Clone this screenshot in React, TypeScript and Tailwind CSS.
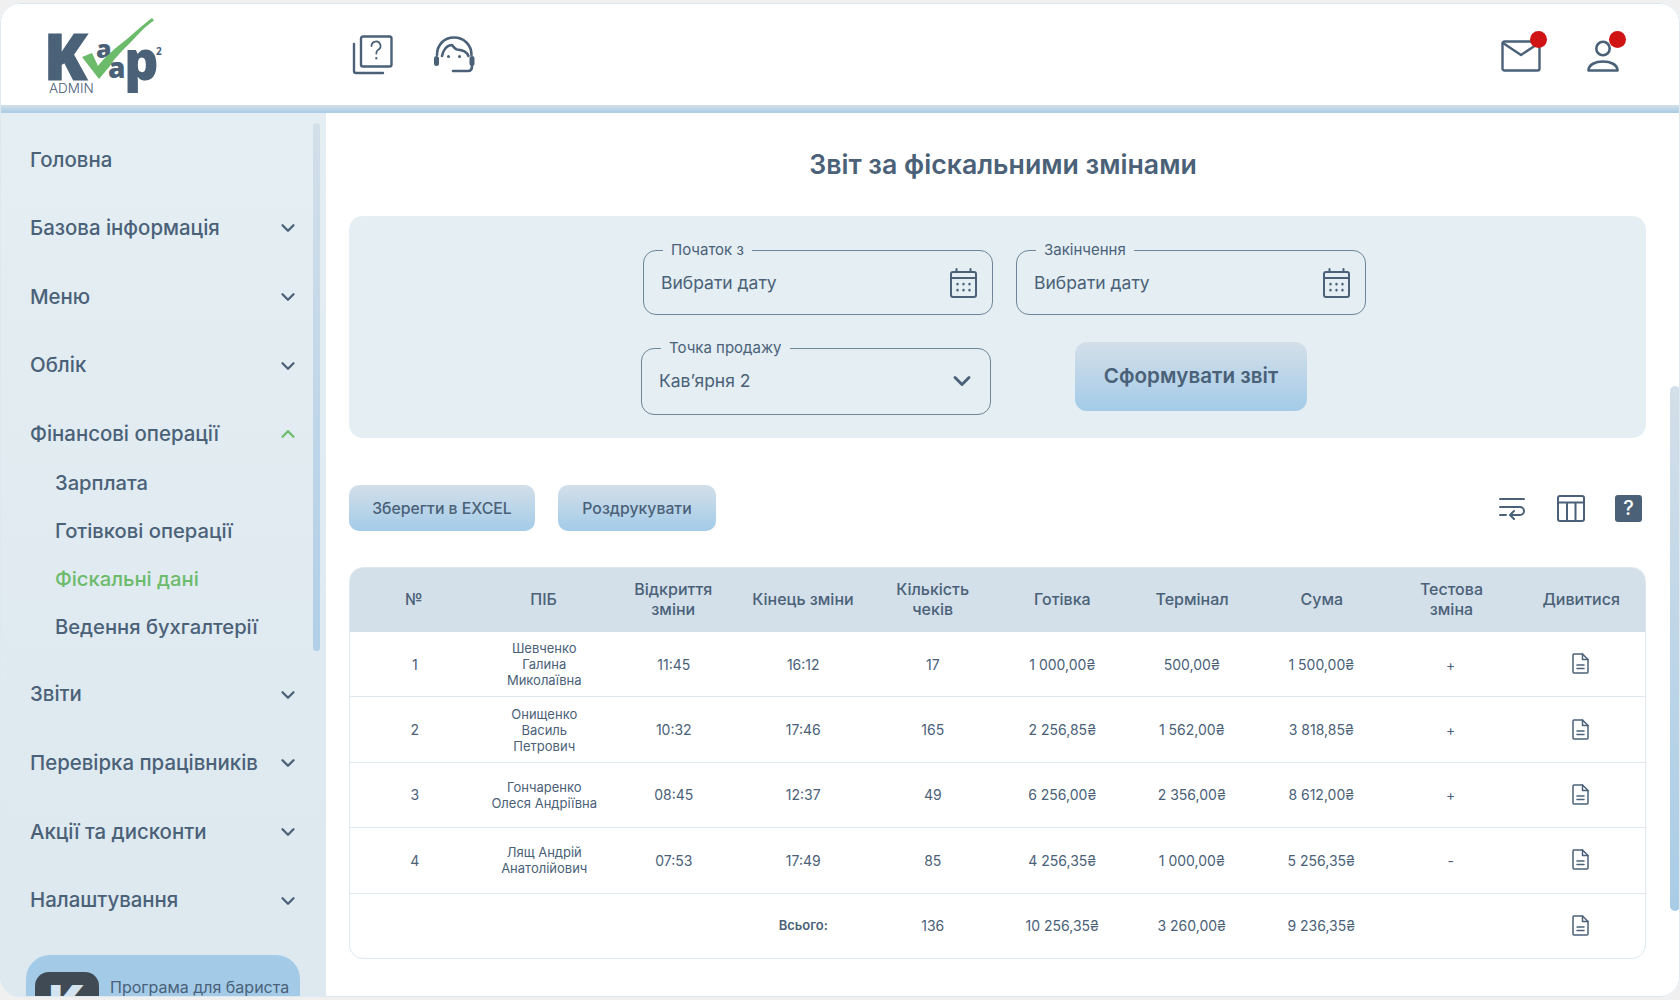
import { ChevronDown, ChevronUp } from "lucide-react";

const font = "font-['Inter',sans-serif]";

const rows = [
  { n: "1", name: ["Шевченко", "Галина", "Миколаївна"], open: "11:45", end: "16:12", count: "17", cash: "1 000,00₴", term: "500,00₴", sum: "1 500,00₴", test: "+" },
  { n: "2", name: ["Онищенко", "Василь", "Петрович"], open: "10:32", end: "17:46", count: "165", cash: "2 256,85₴", term: "1 562,00₴", sum: "3 818,85₴", test: "+" },
  { n: "3", name: ["Гончаренко", "Олеся Андріївна"], open: "08:45", end: "12:37", count: "49", cash: "6 256,00₴", term: "2 356,00₴", sum: "8 612,00₴", test: "+" },
  { n: "4", name: ["Лящ Андрій", "Анатолійович"], open: "07:53", end: "17:49", count: "85", cash: "4 256,35₴", term: "1 000,00₴", sum: "5 256,35₴", test: "-" },
];

function Logo() {
  return (
    <svg width="122" height="82" viewBox="0 0 122 82" className="ml-[44px]">
      <text x="0" y="67" fontFamily="Open Sans" fontWeight="800" fontSize="63" fill="#4a6178" stroke="#4a6178" strokeWidth="1.200">K</text>
      <text x="52" y="45" fontFamily="Open Sans" fontWeight="800" fontSize="25" fill="#4a6178">a</text>
      <text x="64" y="65" fontFamily="Open Sans" fontWeight="800" fontSize="28" fill="#4a6178">a</text>
      <text x="80" y="67" fontFamily="Open Sans" fontWeight="800" fontSize="54" fill="#4a6178">p</text>
      <text x="112" y="42" fontFamily="Open Sans" fontWeight="700" fontSize="10" fill="#4a6178">2</text>
      <path d="M38 44L48 40L54 53C60 45 70 36 83 26C92 18 100 11 108 5L110 7.500C100 14 94 22 86 30C76 40 70 46 66 53L55 66Z" fill="#6cbb6b" />
      <text x="5" y="80" fontFamily="Inter" fontWeight="300" fontSize="13.5" fill="#4a6178">ADMIN</text>
    </svg>
  );
}

function HelpIcon() {
  return (
    <svg width="41" height="40" viewBox="0 0 41 40" fill="none" stroke="#4a6178" strokeWidth="2.4" strokeLinecap="round" strokeLinejoin="round">
      <rect x="9" y="1.5" width="30.5" height="30" rx="2" />
      <path d="M2 9v27a2 2 0 0 0 2 2h27" />
      <path d="M19.5 11a4.5 4.5 0 1 1 6.5 4c-1.5 .9-1.7 2-1.7 3.5" strokeWidth="1.8" />
      <path d="M24.3 23v.4" strokeWidth="2.2" />
    </svg>
  );
}

function SupportIcon() {
  return (
    <svg width="41" height="38" viewBox="0 0 41 38" fill="none" stroke="#4a6178" strokeWidth="2.6" strokeLinecap="round" strokeLinejoin="round">
      <path d="M3 19C3 9 10 1.500 20 1.500S37.500 9 37.500 19" />
      <path d="M8 20C9 14 13 9 18 9c1.500 2 3 4 5 4.500 5 .5 10 2 11.500 6.500" />
      <path d="M38 30c0 3-1.500 5-4 5H19" />
      <rect x="0" y="20" width="5" height="10" rx="2.500" fill="#4a6178" stroke="none" />
      <rect x="35.500" y="20" width="5" height="10" rx="2.500" fill="#4a6178" stroke="none" />
      <circle cx="14.500" cy="20.500" r="1.500" fill="#4a6178" stroke="none" />
      <circle cx="25.500" cy="20.500" r="1.500" fill="#4a6178" stroke="none" />
    </svg>
  );
}

function MailIcon() {
  return (
    <svg width="40" height="32" viewBox="0 0 40 32" fill="none" stroke="#4a6178" strokeWidth="2.4" strokeLinecap="round" strokeLinejoin="round">
      <rect x="1.5" y="1.5" width="37" height="29" rx="2" />
      <path d="M2 3l18 12L38 3" />
    </svg>
  );
}

function UserIcon() {
  return (
    <svg width="32" height="32" viewBox="0 0 32 32" fill="none" stroke="#4a6178" strokeWidth="2.6" strokeLinejoin="round">
      <circle cx="16" cy="8.5" r="6.7" />
      <path d="M1.500 30.500c0-6 7-9 14.500-9s14.500 3 14.500 9z" />
    </svg>
  );
}

function CalendarIcon() {
  return (
    <svg width="27" height="30" viewBox="0 0 27 30" fill="none" stroke="#4a6178" strokeWidth="2" strokeLinecap="round">
      <rect x="1" y="4" width="25" height="25" rx="2" />
      <path d="M1 10h25M6.500 1v3M20.500 1v3" />
      <path d="M7.500 16v.2M13.500 16v.2M19.500 16v.2M7.500 22v.2M13.500 22v.2M19.500 22v.2" strokeWidth="2.400" />
    </svg>
  );
}

function DocIcon() {
  return (
    <svg width="17" height="21" viewBox="0 0 17 21" fill="none" stroke="#4a6178" strokeWidth="1.500" strokeLinejoin="round" strokeLinecap="round" className="-mt-[1px]">
      <path d="M1 2a1 1 0 0 1 1-1h8.500L16 6.500V19a1 1 0 0 1-1 1H2a1 1 0 0 1-1-1z" />
      <path d="M10.500 1v5.500H16M5 12h7M5 15.500h7" />
    </svg>
  );
}

function Field({ label, className, children }: { label: string; className: string; children: React.ReactNode }) {
  return (
    <fieldset className={`w-[350px] rounded-[13px] border border-[#6f8698] pl-[17px] pr-[15px] ${className}`}>
      <legend className="ml-[2px] px-[8px] text-[15px] leading-[15px] text-[#4a6178]">
        <span className="block -translate-y-px">{label}</span>
      </legend>
      <div className="flex h-[50px] items-center justify-between text-[17.500px] text-[#4a6178]">{children}</div>
    </fieldset>
  );
}

function MenuItem({ label, open }: { label: string; open?: boolean }) {
  return (
    <div className="flex h-[68.700px] items-center justify-between">
      <span className="text-[20.400px] font-medium text-[#4a6178]">{label}</span>
      {open ? <ChevronUp size={22} className="text-[#6cbb6b]" strokeWidth={2.500} /> : <ChevronDown size={22} className="text-[#4a6178]" strokeWidth={2.500} />}
    </div>
  );
}

export default function App() {
  return (
    <div className={`h-[1000px] overflow-hidden bg-[#f0f0f0] py-[3px] ${font}`}>
      <div className="relative flex h-[994px] flex-col overflow-hidden rounded-[20px] bg-white">
        {/* Header */}
        <header className="flex h-[102px] shrink-0 items-center">
          <Logo />
          <div className="ml-[186px] mt-[2px] flex items-center gap-[41px]">
            <HelpIcon />
            <SupportIcon />
          </div>
          <div className="ml-auto mr-[61px] mt-[3px] flex items-center gap-[46px]">
            <div className="relative">
              <MailIcon />
              <span className="absolute -right-[6px] -top-[9px] h-[17px] w-[17px] rounded-full bg-[#d01414]" />
            </div>
            <div className="relative">
              <UserIcon />
              <span className="absolute -right-[7px] -top-[9px] h-[17px] w-[17px] rounded-full bg-[#d01414]" />
            </div>
          </div>
        </header>
        <div className="h-[8px] shrink-0 bg-gradient-to-b from-[#d3dfe9] to-[#a9cce6]" />

        <div className="flex min-h-0 flex-1">
          {/* Sidebar */}
          <aside className="flex w-[326px] shrink-0 bg-gradient-to-b from-[#e4eef3] to-[#dde8ef]">
            <nav className="w-[313px] pl-[30px] pr-[14px] pt-[13px]">
              <div className="flex h-[68px] items-center text-[20.400px] font-medium text-[#4a6178]">Головна</div>
              <MenuItem label="Базова інформація" />
              <MenuItem label="Меню" />
              <MenuItem label="Облік" />
              <MenuItem label="Фінансові операції" open />
              <div className="-mt-[9.400px] flex flex-col pb-[8.800px] pl-[25px] text-[20.200px] font-medium">
                <div className="flex h-[48px] items-center text-[#4a6178]">Зарплата</div>
                <div className="flex h-[48px] items-center text-[#4a6178]">Готівкові операції</div>
                <div className="flex h-[48px] items-center text-[#6cbb6b]">Фіскальні дані</div>
                <div className="flex h-[48px] items-center text-[#4a6178]">Ведення бухгалтерії</div>
              </div>
              <MenuItem label="Звіти" />
              <MenuItem label="Перевірка працівників" />
              <MenuItem label="Акції та дисконти" />
              <MenuItem label="Налаштування" />
              <div className="-ml-[4px] mt-[20px] flex h-[60px] w-[274px] gap-[11px] rounded-t-[24px] bg-[#a3cbe8] pl-[9px] pt-[17px]">
                <div className="flex h-[60px] w-[64px] shrink-0 justify-center rounded-[14px] bg-[#3f4a54] text-[48px] font-black leading-[62px] text-[#d3e3ef]">K</div>
                <span className="whitespace-nowrap pt-[5px] text-[16px] leading-[20px] text-[#4a6178]">Програма для бариста</span>
              </div>
            </nav>
            <div className="mt-[10px] h-[528px] w-[7px] rounded-full bg-gradient-to-b from-[#d3dfe9] to-[#b0cfe8]" />
          </aside>

          {/* Main */}
          <main className="min-w-0 flex-1 pl-[23px] pr-[24px]">
            <h1 className="pl-[11px] pt-[33px] text-center text-[26.700px] font-semibold leading-[36px] text-[#4a6178]">Звіт за фіскальними змінами</h1>

            <section className="mt-[34px] flex h-[222px] gap-[23px] rounded-[14px] bg-[#e4eef3] pl-[294px] pt-[27px]">
              <div className="flex flex-col">
                <Field label="Початок з" className="h-[72px]">
                  Вибрати дату
                  <CalendarIcon />
                </Field>
                <Field label="Точка продажу" className="-ml-[2px] mt-[26px] h-[74px]">
                  Кав’ярня 2
                  <ChevronDown size={28} strokeWidth={2.500} className="-mr-[1px]" />
                </Field>
              </div>
              <div className="flex flex-col items-center">
                <Field label="Закінчення" className="h-[72px]">
                  Вибрати дату
                  <CalendarIcon />
                </Field>
                <button className="mt-[27px] h-[69px] w-[232px] rounded-[12px] bg-gradient-to-b from-[#d3dfe9] to-[#a3cbe8] text-[20.600px] font-semibold text-[#4a6178]">
                  Сформувати звіт
                </button>
              </div>
            </section>

            {/* Toolbar */}
            <div className="mt-[47px] flex items-center">
              <button className="h-[46px] w-[186px] rounded-[10px] bg-gradient-to-b from-[#d3dfe9] to-[#a3cbe8] pt-px text-[15.800px] font-medium text-[#4a6178]">Зберегти в EXCEL</button>
              <button className="ml-[23px] h-[46px] w-[158px] rounded-[10px] bg-gradient-to-b from-[#d3dfe9] to-[#a3cbe8] pt-px text-[15.800px] font-medium text-[#4a6178]">Роздрукувати</button>
              <div className="ml-auto mr-[4px] flex items-center gap-[30px]">
                <svg width="26" height="24" viewBox="0 0 26 24" fill="none" stroke="#4a6178" strokeWidth="2" strokeLinecap="round" strokeLinejoin="round" className="mr-[2px]">
                  <path d="M1 3h24M1 11h20a4 4 0 0 1 0 8H12M1 19h6M15 15l-4 4 4 4" />
                </svg>
                <svg width="28" height="27" viewBox="0 0 28 27" fill="none" stroke="#4a6178" strokeWidth="2">
                  <rect x="1" y="1" width="26" height="25" rx="2" />
                  <path d="M1 7.500h26M10 7.500V26M18.500 7.500V26" />
                </svg>
                <div className="flex h-[27px] w-[27px] items-center justify-center rounded-[3px] bg-[#4a6178] text-[20px] font-medium text-white">?</div>
              </div>
            </div>

            {/* Table */}
            <div className="mt-[36px] overflow-hidden rounded-[14px] border border-[#dde8ef] text-[#4a6178]">
              <div className="-mx-px -mt-px grid h-[65px] grid-cols-10 items-center bg-[#d3dfe9] pb-[2px] text-center text-[16px] font-medium leading-[20px]">
                <div>№</div>
                <div>ПІБ</div>
                <div>Відкриття<br />зміни</div>
                <div>Кінець зміни</div>
                <div>Кількість<br />чеків</div>
                <div>Готівка</div>
                <div>Термінал</div>
                <div>Сума</div>
                <div>Тестова<br />зміна</div>
                <div>Дивитися</div>
              </div>
              {rows.map((r) => (
                <div key={r.n} className="grid h-[65.400px] grid-cols-10 items-center border-b border-[#dde8ef] text-center text-[14px]">
                  <div>{r.n}</div>
                  <div className="text-[13px] leading-[16px]">
                    {r.name.map((line) => (
                      <div key={line}>{line}</div>
                    ))}
                  </div>
                  <div>{r.open}</div>
                  <div>{r.end}</div>
                  <div>{r.count}</div>
                  <div>{r.cash}</div>
                  <div>{r.term}</div>
                  <div>{r.sum}</div>
                  <div>{r.test}</div>
                  <div className="flex justify-center"><DocIcon /></div>
                </div>
              ))}
              <div className="grid h-[64px] grid-cols-10 items-center text-center text-[14px]">
                <div className="col-span-3" />
                <div className="text-[13px] font-semibold">Всього:</div>
                <div>136</div>
                <div>10 256,35₴</div>
                <div>3 260,00₴</div>
                <div>9 236,35₴</div>
                <div />
                <div className="flex justify-center"><DocIcon /></div>
              </div>
            </div>
          </main>

          {/* Page scrollbar */}
          <div className="w-[10px] shrink-0">
            <div className="mt-[273px] h-[525px] rounded-full bg-gradient-to-b from-[#d3dfe9] to-[#a9cce6]" />
          </div>
        </div>
        <div className="pointer-events-none absolute inset-0 rounded-[20px] border border-[#dde8ef]" />
      </div>
    </div>
  );
}
